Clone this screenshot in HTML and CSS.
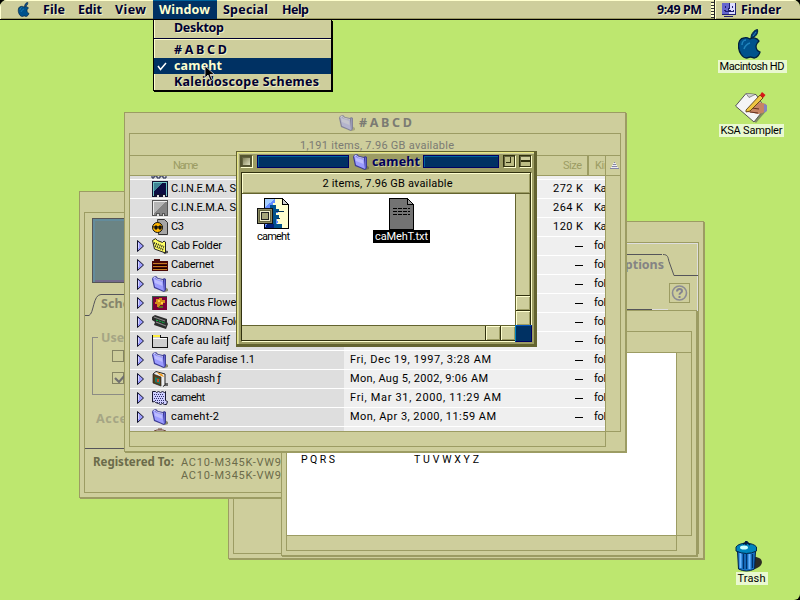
FILE: index.html
```html
<!DOCTYPE html>
<html lang="en">
<head>
<meta charset="utf-8">
<title>Finder</title>
<link rel="stylesheet" href="styles.css">
</head>
<body>
<svg class="defs" width="0" height="0">
  <symbol id="folder" viewBox="0 0 16 16">
    <path d="M13 11l3 2v2l-3 1-4-1z" fill="#666640" opacity=".7"/>
    <path d="M1 1l3-1 2 2 5 1 1-1 2 1v11l-2 2-10-4L0 3z" fill="#3b3b94"/>
    <path d="M1 2l2-1 1 2 7 2 1 10-9-4z" fill="#9c9cff"/>
    <path d="M2 3l2 1 6 2 .5 4L3 7z" fill="#bdbdff"/>
    <path d="M12 4l1-1v11l-1 1z" fill="#6464cf"/>
    <path d="M1.500 2l2-.8L5 3l6 1.500" fill="none" stroke="#e6e6ff" stroke-width=".8"/>
  </symbol>
  <symbol id="tri" viewBox="0 0 7 12"><path d="M.5.5v11L6.5 6z" fill="#9c9cff" stroke="#111128"/><path d="M1.500 3v5" stroke="#d6d6ff"/></symbol>
  <symbol id="apple" viewBox="0 0 24 30">
    <path d="M12 10c-2-1-4-2-6-1-4 0-5.500 4-5.500 8 0 6 4 12 8 12 2 0 2.500-1 4-1s2 1 4 1c3-1 5-4 5.500-6-3-1-4-4-4-6s1-3 3-5c-2-3-6-4-9-2z" fill="#00528c" stroke="#001f3f" stroke-width="1.300"/>
    <path d="M13 9c0-4 3-8 6.500-8.500 1 4-2 8-6.500 8.500z" fill="#003c78" stroke="#001f3f"/>
    <path d="M4 16c0-3 2-5 4-5M6 20c1-3 3-5 6-6" fill="none" stroke="#1f84bd" stroke-width="1.500"/>
    <path d="M15 7l3-4" stroke="#2f84b5"/>
  </symbol>
</svg>
<div class="desktop">
  <header class="menubar">
    <svg class="logo" width="14" height="15"><use href="#apple"/></svg>
    <nav class="menus">
      <span class="m m1"><b data-w="22">File</b></span><span class="m m2"><b data-w="24">Edit</b></span><span class="m m3"><b data-w="31">View</b></span><span class="m m4 open"><b data-w="51">Window</b></span><span class="m m5"><b data-w="45">Special</b></span><span class="m"><b data-w="27">Help</b></span>
    </nav>
    <div class="clock"><b data-w="45">9:49 PM</b></div>
    <div class="grip"></div>
    <div class="app">
      <svg width="15" height="15" viewBox="0 0 15 15" shape-rendering="crispEdges"><rect x="1" y="1" width="14" height="12" fill="#1f1f70"/><rect x="1" y="1" width="7" height="11" fill="#6666cf"/><rect x="8" y="1" width="6" height="11" fill="#dcdcff"/><path d="M4.500 4v2M11.500 4v2M8.500 1v5h-1v2h2M3 8.500h1v1h8v-1h1" fill="none" stroke="#1f1f70"/><path d="M3 14.500h9" stroke="#1f1f70"/></svg>
      <b data-w="40">Finder</b>
    </div>
  </header>

  <section class="win win-options">
    <div class="pane">
      <div class="tabline">
        <span class="tablabel"><b data-w="49">Options</b></span>
        <svg width="36" height="22" viewBox="0 0 36 22"><path d="M0 .5c5 0 5 3 6 7l5 14h25" transform="translate(1 0)" fill="none" stroke="#55555a"/></svg>
      </div>
      <div class="help"><svg width="21" height="20" viewBox="0 0 21 20"><circle cx="10.500" cy="10" r="7" fill="none" stroke="#8c8c94" stroke-width="1.600"/><path d="M8 8.500c0-3.500 5-3 5-.5 0 2-2.500 1.500-2.500 3.700M10.500 13v2" fill="none" stroke="#848490" stroke-width="2"/></svg></div>
      <div class="rule"></div>
    </div>
  </section>

  <section class="win win-register">
    <div class="pane">
      <div class="preview"></div>
      <div class="schemes">
        <svg width="60" height="22" viewBox="0 0 60 22"><path d="M0 21.500h4c5-2 4-21 12-21h44" fill="none" stroke="#55555a"/></svg>
        <b class="sch" data-w="49">Scheme</b>
      </div>
      <fieldset class="group">
        <legend><b data-w="65">Use Sound</b></legend>
        <div class="check"></div>
        <div class="check"><svg width="15" height="12" viewBox="0 0 15 12"><path d="M2 5l4 4 7-8" fill="none" stroke="#707070" stroke-width="2.200"/></svg></div>
      </fieldset>
      <div class="accent"><b data-w="46">Accent</b></div>
      <dl class="reg"><dt><b data-w="81">Registered To:</b></dt><dd><span data-w="100">AC10-M345K-VW9</span><span data-w="100">AC10-M345K-VW9</span></dd></dl>
    </div>
  </section>

  <section class="win win-sample">
    <div class="frame">
      <div class="info"></div>
      <div class="main"><p><span data-w="34">PQRS</span><span data-w="65">TUVWXYZ</span></p></div>
      <div class="vs"></div><div class="hs"></div><div class="corner"></div>
    </div>
  </section>

  <section class="win win-list">
    <h2 class="title"><svg width="16" height="16" opacity=".5"><use href="#folder"/></svg><b data-w="53">#ABCD</b></h2>
    <div class="frame">
      <div class="info"><span data-w="154">1,191 items, 7.96 GB available</span></div>
      <div class="main">
        <div class="head"><span class="hname"><i data-w="25">Name</i></span><span class="hsize"><i data-w="19">Size</i></span><span class="hkind"><i data-w="21">Kind</i></span></div>
        <div class="rows">
          <div class="row first"><span class="name"><i></i><svg class="ic" width="18" height="3" viewBox="0 0 18 3"><path d="M1 0v2h2V0h3v2h3V0h3v2h3V0" fill="none" stroke="#182048"/></svg></span><span class="date"></span><span class="size"></span><span class="kind"></span></div>
          <div class="row"><span class="name"><i></i><svg class="ic" width="16" height="16" viewBox="0 0 16 16" shape-rendering="crispEdges"><path d="M0 0h16v16h-3v-2h-2v2H7v-2H5v2H0z" fill="#111130"/><path d="M1.500 15V1.500h13V15" fill="none" stroke="#71c6c6"/><path d="M2 2h9L2 11z" fill="#3f8494"/><path d="M10 2L2 10v3h12V2z" fill="#0c0c42"/></svg><span data-w="65">C.I.N.E.M.A. S</span></span><span class="date"></span><span class="size"><span data-w="30">272 K</span></span><span class="kind">Kaleidoscope</span></div>
          <div class="row"><span class="name"><i></i><svg class="ic" width="16" height="16" viewBox="0 0 16 16" shape-rendering="crispEdges"><path d="M.5.5h15v15h-3v-2h-2v2h-3v-2h-3v2h-4z" fill="#848484" stroke="#555"/><path d="M1.500 15V1.500h13" fill="none" stroke="#eee"/><path d="M2 2h11L2 13z" fill="#b5b5b5"/></svg><span data-w="65">C.I.N.E.M.A. S</span></span><span class="date"></span><span class="size"><span data-w="30">264 K</span></span><span class="kind">Kaleidoscope</span></div>
          <div class="row"><span class="name"><i></i><svg class="ic" width="16" height="16" viewBox="0 0 16 16"><path d="M5.500.5h7l3 3v12h-9z" fill="#a5a5a5" stroke="#333"/><circle cx="5.500" cy="8.500" r="5" fill="#ffb500" stroke="#111"/><path d="M0 8h11M3 7h2v3H3zM7 7h2v3H7z" stroke="#111" fill="#111"/></svg><span data-w="13">C3</span></span><span class="date"></span><span class="size"><span data-w="30">120 K</span></span><span class="kind">Kaleidoscope</span></div>
          <div class="row"><span class="name"><svg class="tri" width="7" height="12"><use href="#tri"/></svg><svg class="ic" width="16" height="16" viewBox="0 0 16 16"><path d="M11 12l5 1v2l-4 1z" fill="#555"/><path d="M.5 2.500L3.500.7l2 1.800 5 2L12 3l1.500 1v11l-11-4z" fill="#ffff63" stroke="#222"/><path d="M2 5l10 4M3 8l9 4" stroke="#222" stroke-width="2" stroke-dasharray="1 1"/></svg><span data-w="51">Cab Folder</span></span><span class="date"></span><span class="size"><em></em></span><span class="kind">folder</span></div>
          <div class="row"><span class="name"><svg class="tri" width="7" height="12"><use href="#tri"/></svg><svg class="ic" width="16" height="16" viewBox="0 0 16 16" shape-rendering="crispEdges"><path d="M0 4h2V2h6v2h8v10H0z" fill="#4a0808"/><path d="M1 6.500h14M1 9.500h14M1 12.500h14" stroke="#c67b21"/><path d="M1 8h14M1 11h14" stroke="#180000"/></svg><span data-w="43">Cabernet</span></span><span class="date"></span><span class="size"><em></em></span><span class="kind">folder</span></div>
          <div class="row"><span class="name"><svg class="tri" width="7" height="12"><use href="#tri"/></svg><svg class="ic" width="16" height="16"><use href="#folder"/></svg><span data-w="31">cabrio</span></span><span class="date"></span><span class="size"><em></em></span><span class="kind">folder</span></div>
          <div class="row"><span class="name"><svg class="tri" width="7" height="12"><use href="#tri"/></svg><svg class="ic" width="16" height="16" viewBox="0 0 16 16" shape-rendering="crispEdges"><path d="M0 1h15v14H0z" fill="#7b0039"/><path d="M.5 15V1.500H15" fill="none" stroke="#395a4a"/><path d="M4 4h3V3h3v2h3v3h-2v2H8v2H5V9H3V7h1z" fill="#d68c18"/><path d="M6 5h2v2H6zM9 7h2v2H9z" fill="#ffce42"/><path d="M7 11h4v2H6z" fill="#5a6b21"/></svg><span data-w="69">Cactus Flower</span></span><span class="date"></span><span class="size"><em></em></span><span class="kind">folder</span></div>
          <div class="row"><span class="name"><svg class="tri" width="7" height="12"><use href="#tri"/></svg><svg class="ic" width="16" height="16" viewBox="0 0 16 16"><path d="M0 3l3-2 12 4v3l1 2-2 5L2 11l1-3-3-2z" fill="#2c2c2c"/><path d="M2 3l11 4M4 8l10 4" stroke="#888" stroke-width="1.300"/><path d="M4 6l9 3" stroke="#00ce42" stroke-dasharray="2 1"/></svg><span data-w="79">CADORNA Folder</span></span><span class="date"></span><span class="size"><em></em></span><span class="kind">folder</span></div>
          <div class="row"><span class="name"><svg class="tri" width="7" height="12"><use href="#tri"/></svg><svg class="ic" width="16" height="16" viewBox="0 0 16 16" shape-rendering="crispEdges"><path d="M.5 14.500v-12h8v2h7v10z" fill="#cecece" stroke="#111"/><path d="M1 2h7v2H1z" fill="#ffef42"/><path d="M1 5.500h14" stroke="#fff"/></svg><span data-w="59">Cafe au laitƒ</span></span><span class="date"></span><span class="size"><em></em></span><span class="kind">folder</span></div>
          <div class="row"><span class="name"><svg class="tri" width="7" height="12"><use href="#tri"/></svg><svg class="ic" width="16" height="16"><use href="#folder"/></svg><span data-w="84">Cafe Paradise 1.1</span></span><span class="date"><span data-w="141">Fri, Dec 19, 1997, 3:28 AM</span></span><span class="size"><em></em></span><span class="kind">folder</span></div>
          <div class="row"><span class="name"><svg class="tri" width="7" height="12"><use href="#tri"/></svg><svg class="ic" width="16" height="16" viewBox="0 0 16 16"><path d="M12 12h4v3h-4z" fill="#666"/><path d="M1 3l3-2.500L13 3v11l-2 1.500" fill="#eee" stroke="#222"/><path d="M1 3l8 3v9L1 12z" fill="#5a3f18" stroke="#222" stroke-width=".7"/><path d="M4 1l6 2 2 3-3-1z" fill="#ef9c21"/><path d="M3 6l5 2v5l-5-2z" fill="#187b6b"/><path d="M5 8h2v3H5z" fill="#e04018"/></svg><span data-w="50">Calabash ƒ</span></span><span class="date"><span data-w="138">Mon, Aug 5, 2002, 9:06 AM</span></span><span class="size"><em></em></span><span class="kind">folder</span></div>
          <div class="row"><span class="name"><svg class="tri" width="7" height="12"><use href="#tri"/></svg><svg class="ic" width="16" height="16" viewBox="0 0 16 16"><path d="M.5 1.500h3l1 1 2-1 2 1 2-1 2 1 1-1v9l2 1-1 3h-2l-2-1-2 1-2-1-3-1-1-1-2 .5z" fill="#ceceff" stroke="#181830"/><path d="M2 4.500h10M3 6.500h9M2 8.500h10M3 10.500h9M5 12.500h8" stroke="#31316b" stroke-dasharray="1 1"/></svg><span data-w="34">cameht</span></span><span class="date"><span data-w="151">Fri, Mar 31, 2000, 11:29 AM</span></span><span class="size"><em></em></span><span class="kind">folder</span></div>
          <div class="row"><span class="name"><svg class="tri" width="7" height="12"><use href="#tri"/></svg><svg class="ic" width="16" height="16"><use href="#folder"/></svg><span data-w="48">cameht-2</span></span><span class="date"><span data-w="146">Mon, Apr 3, 2000, 11:59 AM</span></span><span class="size"><em></em></span><span class="kind">folder</span></div>
          <div class="row last"><span class="name"><i></i><svg class="ic" width="16" height="3" viewBox="0 0 16 3"><path d="M2 3l3-1h6l3 1M6 1h4" stroke="#734a39" fill="none"/></svg></span><span class="date"></span><span class="size"></span><span class="kind"></span></div>
        </div>
      </div>
      <div class="vs"><div class="sort"><svg width="9" height="8" viewBox="0 0 9 8" shape-rendering="crispEdges"><path d="M4 0h1v1H4zM3 2h3v1H3zM2 4h5v1H2z" fill="#8484a5"/><path d="M3 1h3v1H3zM2 3h5v1H2zM1 5h7v1H1z" fill="#efefef"/><path d="M0 6h9v1H0z" fill="#8484a5"/></svg></div></div>
      <div class="hs"></div><div class="corner"></div>
    </div>
  </section>

  <section class="front">
    <h2 class="ftitle"><span class="box close"></span><span class="stripe s1"></span><svg width="16" height="16"><use href="#folder"/></svg><b data-w="48">cameht</b><span class="stripe s2"></span><span class="box zoom"></span><span class="box shade"></span></h2>
    <div class="fframe">
      <div class="finfo"><span data-w="130">2 items, 7.96 GB available</span></div>
      <div class="fmain">
        <figure class="f1">
          <svg width="33" height="32" viewBox="0 0 33 32" shape-rendering="crispEdges"><path d="M7.500.5h18l6 6v24h-24z" fill="#ffffce" stroke="#000"/><path d="M8 1h10v4h-2v6h5v4h-2v4l2 5-3 6H8z" fill="#638cff"/><path d="M8 1h10L8 9z" fill="#a5ceff"/><path d="M13 7h6v4h3v3h-3v3h3v4h-3v5h6v4H10v-5h4v-8z" fill="#00528c"/><path d="M10 26h7v4h-9z" fill="#001f7b"/><path d="M19 13.500h8M20 20.500h3" stroke="#00315a" fill="none"/><path d="M25.500.5v6h6z" fill="#cecece" stroke="#000"/><rect x=".5" y="10.500" width="15" height="15" fill="#63633f" stroke="#111"/><rect x="1.500" y="11.500" width="13" height="13" fill="none" stroke="#8c8c63"/><rect x="3.500" y="13.500" width="9" height="9" fill="#a5a57b" stroke="#efefce"/><rect x="4.500" y="14.500" width="7" height="7" fill="none" stroke="#222"/></svg>
          <figcaption><span data-w="33">cameht</span></figcaption>
        </figure>
        <figure class="f2">
          <svg width="25" height="32" viewBox="0 0 25 32" shape-rendering="crispEdges"><path d="M.5.5h18l6 6v25H.5z" fill="#737373" stroke="#000"/><path d="M18.500.5v6h6z" fill="#999" stroke="#000"/><path d="M4 10.500h17M4 13.500h17M4 16.500h17" stroke="#000" stroke-dasharray="4 1"/></svg>
          <figcaption class="sel"><span data-w="53">caMehT.txt</span></figcaption>
        </figure>
      </div>
      <div class="fvs"><span></span><span></span></div>
      <div class="fhs"><span></span><span></span></div>
      <div class="grow"></div>
    </div>
  </section>

  <figure class="disk hd"><svg width="24" height="30"><use href="#apple"/></svg><figcaption><span data-w="65">Macintosh HD</span></figcaption></figure>
  <figure class="disk ksa"><svg width="33" height="32" viewBox="0 0 33 32"><path d="M14 24l7 7 11-13-3-3z" fill="#555" opacity=".6"/><path d="M.5 14L11 1.500l10 1L30 16 19 30z" fill="#f5f5f5" stroke="#555"/><path d="M11 1.500l3 4 6-3" fill="#ccc" stroke="#666" stroke-width=".7"/><path d="M14 17c3-2 4-8 10-7l7 2v7c-4 3-8 4-12 2l-7-1z" fill="#c68463"/><path d="M15 20l8 1M17 16l7 1" stroke="#633121"/><path d="M29 12l3 1v6l-3 2z" fill="#8484bd"/><path d="M11 18L25 3l3 3-13 13-4 1z" fill="#efc642" stroke="#4a3108" stroke-width=".8"/><path d="M25 3l2-3 3.500 3L28 6z" fill="#d61818"/></svg><figcaption><span data-w="62">KSA Sampler</span></figcaption></figure>
  <figure class="disk trash"><svg width="29" height="32" viewBox="0 0 29 32"><path d="M18 17c11-1 12 9 2 12z" fill="#2c2c24"/><path d="M2.500 11h18l-1 18q-8 4-16 0z" fill="#1873c5" stroke="#001f4a"/><path d="M5.500 13v15M14.500 14v15" stroke="#6bb6ff" stroke-width="2"/><path d="M8.500 14v15M11.500 14v15M17.500 14v14" stroke="#00316b" stroke-width="1.300"/><path d="M1 7C4 2 18 2 21.500 7v4q-10 5-20.500 0z" fill="#0084bd" stroke="#00294a"/><ellipse cx="9" cy="7.500" rx="4" ry="2" fill="#ceffff"/><path d="M8 4l4-2 3 3M11 1v4" fill="none" stroke="#00183f" stroke-width="1.500"/></svg><figcaption><span data-w="28">Trash</span></figcaption></figure>

  <div class="menu">
    <div class="mi mi-top"><b data-w="50">Desktop</b></div>
    <div class="mi mi-sep"><b data-w="53">#ABCD</b></div>
    <div class="mi cur"><svg width="10" height="9" viewBox="0 0 10 9"><path d="M1 4l2.500 3.500L9 1" fill="none" stroke="#fff" stroke-width="1.500"/></svg><b data-w="48">cameht</b></div>
    <div class="mi"><b data-w="145">Kaleidoscope Schemes</b></div>
  </div>
  <svg class="cursor" width="12" height="18" viewBox="0 0 12 18"><path d="M1 1v12l3-3 2.500 6 2-1L6 9.500h4.500z" fill="#000" stroke="#ddd" stroke-width=".8"/></svg>
</div>
<script src="fit.js"></script>
</body>
</html>
```
FILE: styles.css
```css
* { box-sizing: border-box; }
html { background: #000; }
body { margin: 0; width: 800px; height: 600px; overflow: hidden; font: 11px/13px Roboto, "Liberation Sans", sans-serif; color: #000; }
b { font: bold 12.5px/15px "Noto Sans", "Open Sans", sans-serif; }
i { font-style: normal; }
figure, h2, p, dl, dd, fieldset { margin: 0; padding: 0; }
h2 { font-size: 12px; }
svg { display: block; flex: none; }
[data-w] { display: inline-block; white-space: pre; }
.defs { position: absolute; }
.desktop { position: relative; width: 800px; height: 600px; background: #bde76f; border-radius: 7px 7px 6px 0; overflow: hidden; }

.menubar { display: flex; height: 20px; background: #cece9c; border-bottom: 1px solid #000; box-shadow: inset 0 1px #ffffce, inset 1px 0 #ffffce, inset 0 -1px #9c9c63; color: #000030; }
.menubar b { text-shadow: 1px 1px #efefc6; line-height: 19px; }
.logo { margin: 2px 6px 0 17px; }
.menus { display: flex; flex: 1; }
.m { padding-left: 6px; }
.m1 { width: 35px; }
.m2 { width: 37px; }
.m3 { width: 44px; }
.m4 { width: 64px; }
.m5 { width: 59px; }
.m.open { background: #003163; color: #ffffce; box-shadow: inset 0 1px #00639c; }
.m.open b { text-shadow: none; }
.clock { width: 54px; }
.grip { width: 3px; height: 16px; margin-top: 2px; background: repeating-linear-gradient(#333 0 1px, #ffffce 1px 3px); }
.app { display: flex; align-items: flex-start; width: 86px; border-left: 1px solid #222; box-shadow: inset 1px 0 #ffffce; padding-left: 6px; gap: 5px; }
.app svg { margin-top: 2px; }

.menu { position: absolute; left: 153px; top: 20px; width: 179px; height: 71px; background: #cece9c; border: 1px solid #000; border-top: 0; box-shadow: 1px 1px #000, inset 1px 0 #ffffce; color: #000030; }
.mi { height: 16px; padding-left: 20px; display: flex; }
.mi b { line-height: 16px; text-shadow: 1px 1px #efefc6; }
.mi-top { height: 19px; border-bottom: 1px solid #000030; }
.mi-sep { height: 19px; border-top: 1px solid #ffffce; padding-top: 2px; }
.mi.cur { background: #003163; color: #ffffce; padding-left: 3px; }
.mi.cur b { text-shadow: none; line-height: 15px; }
.cur svg { margin: 4px 7px 0 0; }
.cursor { position: absolute; left: 204px; top: 65px; }

.win { position: absolute; background: #cece9c; border: 1px solid #9c9c63; box-shadow: 1px 1px #9c9c63; }
.frame { display: grid; }
.info { grid-column: 1 / 3; border: 1px solid #9c9c63; border-bottom: 0; text-align: center; }
.main { border: 1px solid #9c9c63; border-width: 1px 0 0 1px; overflow: hidden; }
.vs { border: 1px solid #9c9c63; border-bottom: 0; }
.hs { border: 1px solid #9c9c63; border-right: 0; }
.corner { border: 1px solid #9c9c63; border-width: 1px 0 0 1px; }

.win-options { left: 228px; top: 221px; width: 476px; height: 338px; padding: 20px 4px 4px; }
.win-options .pane { height: 312px; border: 1px solid #9c9c63; box-shadow: inset -1px 1px #dedede; padding-top: 11px; }
.tabline { display: flex; justify-content: flex-end; height: 22px; }
.tablabel { width: 60px; border-top: 1px solid #55555a; padding: 2px 0 0 13px; color: #848484; }
.help { width: 21px; height: 20px; margin: 7px 8px 0 auto; outline: 1px solid #9c9c63; outline-offset: -1px; }
.rule { width: 120px; height: 2px; margin: 6px 30px 0 auto; background: linear-gradient(90deg, #55555a 87%, #dedede 87%); }

.win-register { left: 79px; top: 191px; width: 320px; height: 307px; padding: 20px 4px 4px; }
.win-register .pane { height: 281px; border: 1px solid #9c9c63; }
.preview { width: 100px; height: 65px; margin: 5px 0 0 7px; background: #6b8484; border: 1px solid #555; box-shadow: inset 2px 2px #638c9c, inset -2px -2px #736b8c; }
.schemes { display: flex; margin-top: 11px; height: 22px; }
.sch { margin: 2px 0 0 -44px; color: #84846b; }
.group { width: 120px; height: 65px; margin: 14px 0 0 7px; border: 1px solid #8c8c84; padding: 5px 0 0 19px; }
.group legend { margin-left: -14px; padding: 0 3px; color: #a5a584; }
.check { width: 12px; height: 12px; border: 1px solid #848463; margin-bottom: 10px; }
.accent { height: 54px; border-bottom: 1px solid #55555a; padding: 16px 0 0 11px; color: #a5a584; }
.reg { display: flex; padding: 6px 0 0 8px; color: #6b6b4a; }
.reg dt { width: 88px; }
.reg dt b { font-size: 11.5px; line-height: 14px; }
.reg dd { display: flex; flex-direction: column; align-items: flex-start; padding-top: 1px; }

.win-sample { left: 281px; top: 310px; width: 416px; height: 246px; padding: 20px 4px; }
.win-sample .frame { grid-template: 21px 183px 16px / 390px 16px; }
.win-sample .main { background: #fff; padding: 100px 0 0 14px; font-size: 10.5px; }
.win-sample p { display: flex; }
.win-sample p span:first-child { width: 113px; }

.win-list { left: 124px; top: 112px; width: 502px; height: 340px; padding: 0 4px; }
.title { display: flex; height: 20px; padding: 2px 0 0 210px; gap: 4px; color: #7b7b73; }
.win-list .frame { grid-template: 22px 276px 16px / 476px 16px; }
.win-list .info { padding: 5px 0 0 4px; color: #7b7b73; }
.head { display: flex; height: 20px; border-bottom: 1px solid #9c9c63; color: #9c9c63; padding-top: 3px; }
.hname { flex: none; width: 433px; padding-left: 43px; }
.hsize { flex: none; width: 26px; margin-top: -3px; padding-top: 3px; border-right: 2px solid #9c9c63; }
.hkind { padding-left: 6px; }
.sort { height: 20px; border-bottom: 1px solid #9c9c63; padding: 6px 0 0 4px; }
.rows { height: 255px; overflow: hidden; }
.row { display: grid; grid-template-columns: 214px 205px 34px 22px; height: 19px; line-height: 17px; border-bottom: 1px solid #fff; background: #efefef; overflow: hidden; }
.row.first { height: 4px; }
.name { display: flex; background: #dedede; padding-left: 7px; white-space: nowrap; }
.name > i { width: 7px; }
.tri { margin-top: 3px; }
.ic { margin: 1px 3px 0 8px; }
.first .ic { margin: 0 0 0 7px; }
.date { padding-left: 6px; }
.size { text-align: right; }
.size em { display: block; width: 8px; height: 1px; margin: 9px 0 0 auto; background: #000; }
.kind { padding-left: 11px; white-space: nowrap; overflow: hidden; letter-spacing: -.3px; }

.front { position: absolute; left: 236px; top: 151px; width: 301px; height: 196px; background: #9c9c63; border: 1px solid #63632f; border-width: 1px 3px 3px 1px; box-shadow: inset 1px 1px #e7e784, inset 2px 2px #cece9c; padding: 3px 0 0 3px; }
.ftitle { display: flex; height: 17px; }
.ftitle svg { margin: -1px 3px 0 4px; }
.ftitle b { color: #00005a; text-shadow: 1px 1px #cece9c; width: 49px; line-height: 13px; }
.ftitle .box { width: 12px; height: 12px; background: #9c9c63; border: 1px solid #31310f; box-shadow: 1px 1px #ffffce, inset 1px 1px #63633f; }
.ftitle .close { background: linear-gradient(135deg, #73734a, #dedebd); border-width: 2px; border-color: #555531; margin-right: 5px; }
.stripe { height: 13px; background: #003163; border: 1px solid #000063; box-shadow: inset 1px 1px #00639c; }
.s1 { width: 92px; }
.s2 { width: 76px; margin: 0 4px 0 2px; }
.ftitle .zoom { background: linear-gradient(#31310f, #31310f) 2px 6px / 5px 1px no-repeat, linear-gradient(#31310f, #31310f) 6px 1px / 1px 6px no-repeat, #bdbd84; margin-right: 4px; }
.ftitle .shade { background: linear-gradient(#cece9c 4px, #31310f 4px 6px, #bdbd84 6px); }
.fframe { display: grid; width: 290px; height: 169px; grid-template: 21px 131px 15px / 273px 15px; border: 1px solid #31310f; box-shadow: 1px 1px #ffffce; margin-left: 1px; }
.finfo { grid-column: 1 / 3; background: #cece9c; border-bottom: 1px solid #63632f; box-shadow: inset 1px 1px #ffffce, inset -1px -1px #9c9c63; text-align: center; padding: 4px 0 0 3px; }
.fmain { background: #fff; display: flex; }
.fmain figure { display: flex; flex-direction: column; align-items: center; }
.fmain figcaption { height: 13px; padding: 0 2px; }
.f1 { width: 37px; margin: 4px 0 0 13px; }
.f2 { width: 57px; margin: 4px 0 0 81px; }
.fmain .sel { background: #000; color: #fff; }
.fvs { display: flex; flex-direction: column; justify-content: flex-end; background: #cece9c; border-left: 1px solid #63632f; box-shadow: inset -1px 0 #9c9c63; }
.fhs { display: flex; justify-content: flex-end; background: #cece9c; border-top: 1px solid #63632f; }
.fvs span { height: 15px; border-top: 1px solid #31310f; box-shadow: inset 1px 1px #ffffce, inset -1px -1px #9c9c63; }
.fhs span { width: 15px; border-left: 1px solid #31310f; box-shadow: inset 1px 1px #ffffce, inset -1px -1px #9c9c63; }
.grow { width: 17px; height: 17px; background: #003163; border: 1px solid #000063; border-top-color: #0052bd; border-left-color: #0084bd; }

.disk { position: absolute; display: flex; flex-direction: column; align-items: center; }
.disk figcaption { height: 13px; padding: 0 2px; background: #e9f8d0; }
.hd { left: 717px; top: 29px; width: 70px; }
.hd svg { margin: 0 0 1px -4px; }
.ksa { left: 718px; top: 92px; width: 67px; }
.trash { left: 735px; top: 540px; width: 33px; }
.trash svg { align-self: flex-start; }
```
FILE: fit.js
```js
// Tracks each label out to its bitmap-font width.
document.querySelectorAll('[data-w]').forEach(function (el) {
  var n = el.textContent.length;
  el.style.width = 'max-content';
  var gap = (Number(el.dataset.w) - el.getBoundingClientRect().width) / (n - 1);
  el.style.width = '';
  el.style.letterSpacing = gap + 'px';
  if (!el.matches('.win-sample p span, .ftitle b')) el.style.marginRight = -gap + 'px';
});
```
